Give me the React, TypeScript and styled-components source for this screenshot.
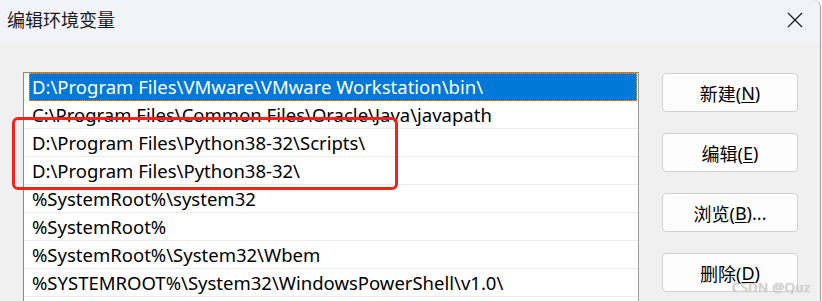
import React from "react";
import styled, { createGlobalStyle } from "styled-components";

const GlobalStyle = createGlobalStyle`
  html, body {
    margin: 0;
    padding: 0;
    background: #f7f7f7;
  }
  * {
    box-sizing: border-box;
  }
`;

const FONT = `"Segoe UI", "Noto Sans", "Noto Sans CJK SC", sans-serif`;

const Page = styled.div`
  position: relative;
  width: 822px;
  height: 301px;
  overflow: hidden;
  font-family: ${FONT};
`;

const Window = styled.div`
  width: 821px;
  height: 301px;
  background: #f0f0f0;
  border-right: 1px solid #9c9c9c;
  border-top-right-radius: 8px;
  overflow: hidden;
  display: flex;
  flex-direction: column;
`;

const TitleBar = styled.div`
  height: 42px;
  flex-shrink: 0;
  background: #f2f3f8;
  display: flex;
  align-items: center;
  justify-content: space-between;
  padding: 0 16px 0 7px;
`;

const Title = styled.span`
  font-size: 18px;
  color: #1a1a1a;
  line-height: 1;
  margin-top: -2px;
`;

const CloseButton = styled.button`
  width: 18px;
  height: 18px;
  padding: 0;
  border: none;
  background: transparent;
  display: flex;
  align-items: center;
  justify-content: center;
  margin-top: -2px;
`;

const Body = styled.div`
  flex: 1;
  display: flex;
  align-items: flex-start;
  padding: 30px 0 0 23px;
  gap: 23px;
`;

const List = styled.ul`
  width: 616px;
  height: 260px;
  margin: 0;
  padding: 0;
  list-style: none;
  background: #ffffff;
  border: 1px solid #8a8a8a;
  border-right-color: #9a9a9a;
`;

const Row = styled.li<{ $selected?: boolean }>`
  height: 28px;
  margin-left: ${(p) => (p.$selected ? "5px" : "0")};
  margin-right: ${(p) => (p.$selected ? "1px" : "0")};
  padding-left: ${(p) => (p.$selected ? "3px" : "8px")};
  display: flex;
  align-items: center;
  font-size: 18.5px;
  white-space: nowrap;
  color: ${(p) => (p.$selected ? "#ffffff" : "#000000")};
  background: ${(p) => (p.$selected ? "#0078d7" : "transparent")};
  border-bottom: 1px solid ${(p) => (p.$selected ? "#0078d7" : "#ebebeb")};
  outline: ${(p) => (p.$selected ? "1px dotted #f7941d" : "none")};
  outline-offset: -1px;
`;

const Buttons = styled.div`
  display: flex;
  flex-direction: column;
  gap: 21px;
  padding-top: 1px;
`;

const Button = styled.button`
  width: 136px;
  height: 39px;
  background: #fdfdfd;
  border: 1px solid #d0d0d0;
  border-radius: 4px;
  font-family: ${FONT};
  font-size: 18px;
  color: #000000;
  padding: 0;
  display: flex;
  align-items: center;
  justify-content: center;

  u {
    text-decoration-thickness: 1px;
    text-underline-offset: 2px;
  }
`;

const Highlight = styled.div`
  position: absolute;
  left: 12px;
  top: 117px;
  width: 386px;
  height: 73px;
  border: 3px solid #f5221b;
  border-radius: 6px;
  pointer-events: none;
`;

const Watermark = styled.div`
  position: absolute;
  left: 732px;
  top: 278px;
  font-family: "Noto Sans", sans-serif;
  font-size: 13px;
  color: #d8d8d8;
  text-shadow: 0 0 1px #9a9a9a;
  letter-spacing: 0.5px;
  white-space: nowrap;
`;

const paths = [
  "D:\\Program Files\\VMware\\VMware Workstation\\bin\\",
  "C:\\Program Files\\Common Files\\Oracle\\Java\\javapath",
  "D:\\Program Files\\Python38-32\\Scripts\\",
  "D:\\Program Files\\Python38-32\\",
  "%SystemRoot%\\system32",
  "%SystemRoot%",
  "%SystemRoot%\\System32\\Wbem",
  "%SYSTEMROOT%\\System32\\WindowsPowerShell\\v1.0\\",
];

const actions = [
  { label: "新建", key: "N", suffix: "" },
  { label: "编辑", key: "E", suffix: "" },
  { label: "浏览", key: "B", suffix: "..." },
  { label: "删除", key: "D", suffix: "" },
];

const App: React.FC = () => {
  return (
    <Page>
      <GlobalStyle />
      <Window>
        <TitleBar>
          <Title>编辑环境变量</Title>
          <CloseButton aria-label="关闭">
            <svg width="16" height="16" viewBox="0 0 16 16">
              <path d="M1 1 L15 15 M15 1 L1 15" stroke="#1a1a1a" strokeWidth="1.2" />
            </svg>
          </CloseButton>
        </TitleBar>
        <Body>
          <List>
            {paths.map((path, i) => (
              <Row key={path} $selected={i === 0}>
                {path}
              </Row>
            ))}
          </List>
          <Buttons>
            {actions.map((a) => (
              <Button key={a.key}>
                {a.label}(<u>{a.key}</u>){a.suffix}
              </Button>
            ))}
          </Buttons>
        </Body>
      </Window>
      <Highlight />
      <Watermark>CSDN @Quz</Watermark>
    </Page>
  );
};

export default App;
